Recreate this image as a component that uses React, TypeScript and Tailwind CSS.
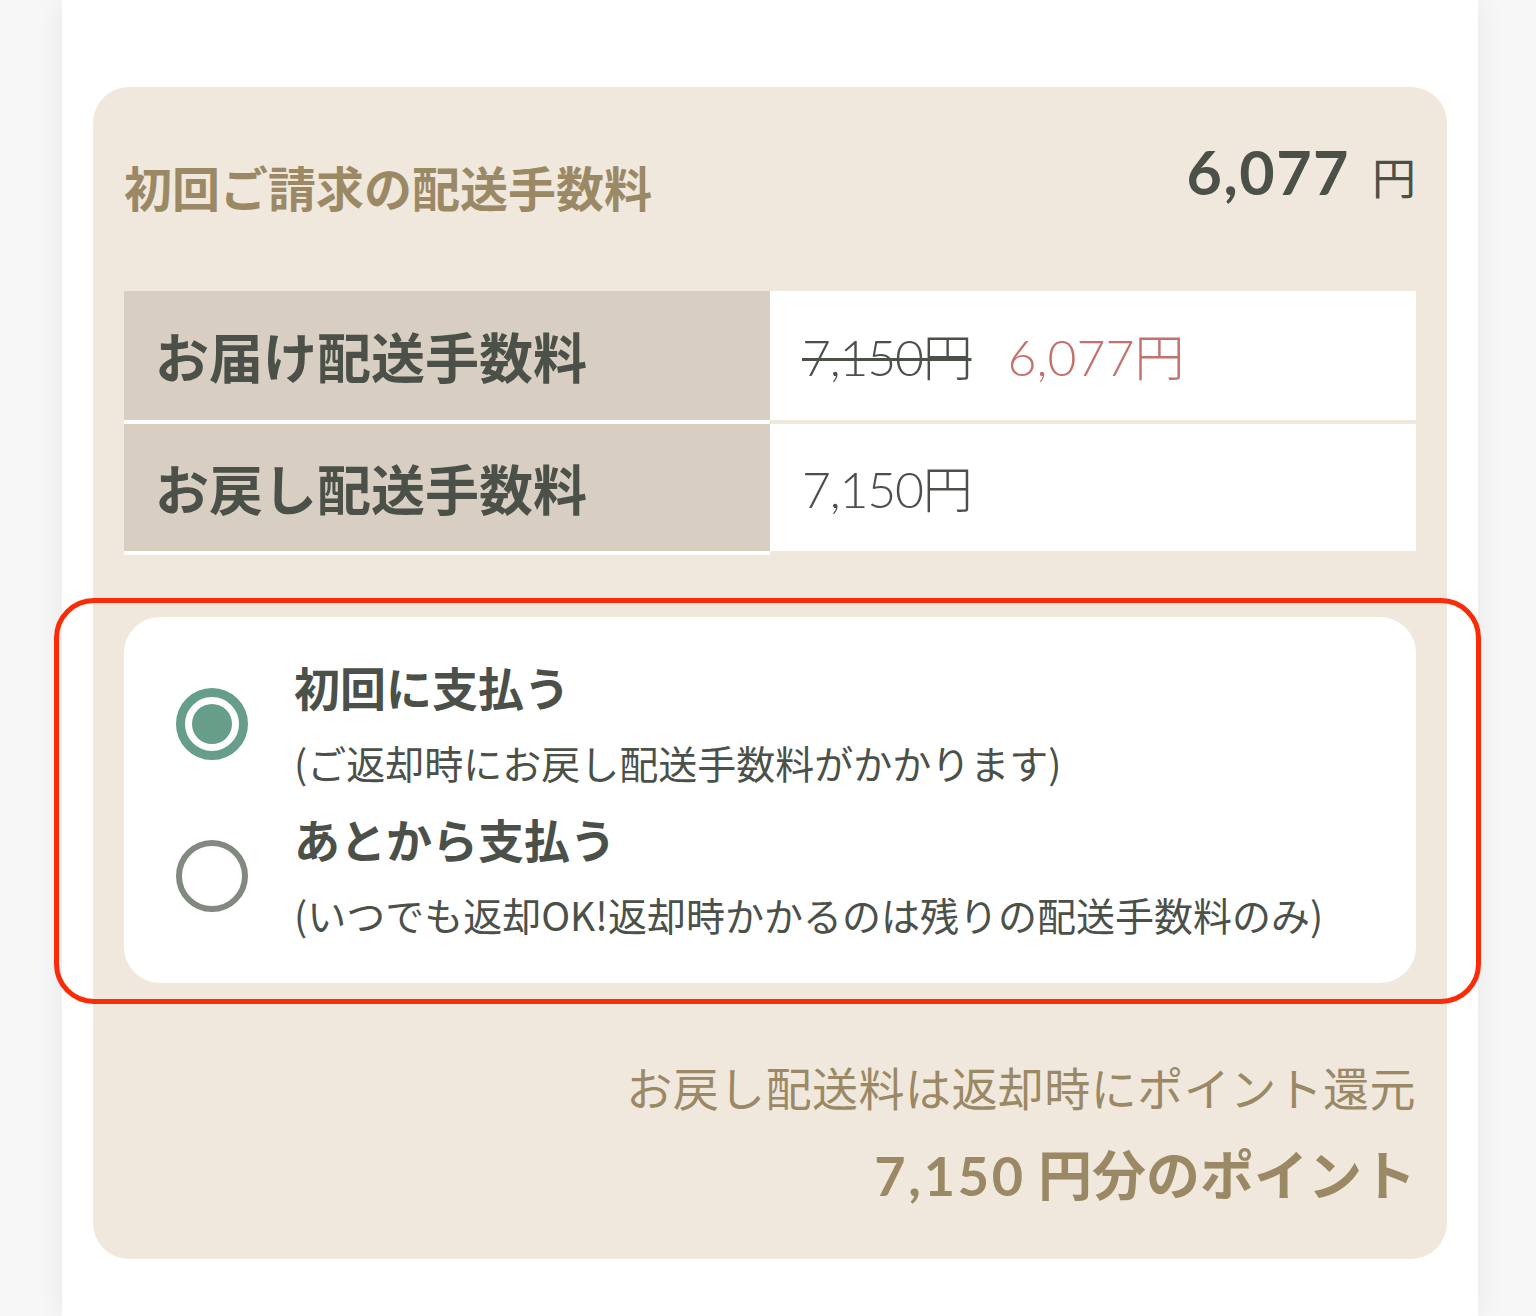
import React from "react";

const jp = { fontFamily: '"Noto Sans CJK JP", "Noto Sans", sans-serif' };
const num = { fontFamily: 'Lato, "Noto Sans CJK JP", sans-serif' };

const Radio = ({ checked }: { checked: boolean }) =>
  checked ? (
    <div className="w-[72px] h-[72px] rounded-full border-[9px] border-[#679e8a] flex items-center justify-center shrink-0">
      <div className="w-[40px] h-[40px] rounded-full bg-[#679e8a]"></div>
    </div>
  ) : (
    <div className="w-[72px] h-[72px] rounded-full border-[6px] border-[#808a7e] shrink-0"></div>
  );

const Option = ({ checked, title, note }: { checked: boolean; title: string; note: string }) => (
  <div className="flex items-center">
    <Radio checked={checked} />
    <div className="ml-[46px]">
      <div className="h-[76px] leading-[76px] text-[46px] font-bold text-[#4b5049]">{title}</div>
      <div className="h-[76px] leading-[76px] text-[39px] text-[#4b5049] whitespace-nowrap">{note}</div>
    </div>
  </div>
);

const App = () => {
  return (
    <div className="min-h-screen bg-[#f7f7f7] pl-[4px]" style={jp}>
      <div className="mx-auto w-[1416px] min-h-[1316px] bg-white shadow-[0_0_28px_rgba(0,0,0,0.07)] px-[31px] pt-[87px]">
        <section className="bg-[#f0e8dc] rounded-[36px] px-[31px] pt-[50px] pb-[44px]">
          <div className="flex justify-between items-start h-[154px]">
            <h2 className="mt-[16px] text-[48px] font-bold text-[#9b8965] leading-[1.4]">
              初回ご請求の配送手数料
            </h2>
            <div className="flex items-baseline text-[#4b5049] -mt-[11px]">
              <span className="text-[61px] font-bold tracking-wide" style={num}>6,077</span>
              <span className="ml-[22px] text-[44px]">円</span>
            </div>
          </div>

          <table className="w-full border-collapse table-fixed">
            <tbody>
              <tr>
                <th className="w-1/2 h-[131px] bg-[#d8cfc2] border-b-4 border-white text-left pl-[31px] text-[54px] font-bold text-[#4b5049]">
                  お届け配送手数料
                </th>
                <td className="h-[131px] bg-white border-b-4 border-[#f0e8dc] pl-[32px] text-[50px]">
                  <span className="text-[#4b5049] line-through decoration-[3px] font-light tracking-tight" style={num}>7,150円</span>
                  <span className="ml-[36px] text-[#c4706f] font-light" style={num}>6,077円</span>
                </td>
              </tr>
              <tr>
                <th className="w-1/2 h-[131px] bg-[#d8cfc2] border-b-4 border-white text-left pl-[31px] text-[54px] font-bold text-[#4b5049]">
                  お戻し配送手数料
                </th>
                <td className="h-[131px] bg-white border-b-4 border-[#f0e8dc] pl-[32px] text-[50px]">
                  <span className="text-[#4b5049] font-light tracking-tight" style={num}>7,150円</span>
                </td>
              </tr>
            </tbody>
          </table>

          <div className="relative mt-[62px] bg-white rounded-[36px] pl-[52px] pt-[31px] pb-[31px]">
            <Option checked title="初回に支払う" note="(ご返却時にお戻し配送手数料がかかります)" />
            <Option checked={false} title="あとから支払う" note="(いつでも返却OK!返却時かかるのは残りの配送手数料のみ)" />
            <div className="absolute -left-[70px] -top-[19px] -right-[65px] -bottom-[21px] border-[5px] border-[#fb2a07] rounded-[40px] pointer-events-none"></div>
          </div>

          <p className="mt-[70px] text-right text-[46px] leading-[66px] text-[#9b8965] tracking-[0.01em]">
            お戻し配送料は返却時にポイント還元
          </p>
          <p className="mt-[15px] text-right text-[54px] leading-[78px] font-bold text-[#9b8965]">
            <span className="tracking-wider" style={num}>7,150</span> 円分のポイント
          </p>
        </section>
      </div>
    </div>
  );
};

export default App;
